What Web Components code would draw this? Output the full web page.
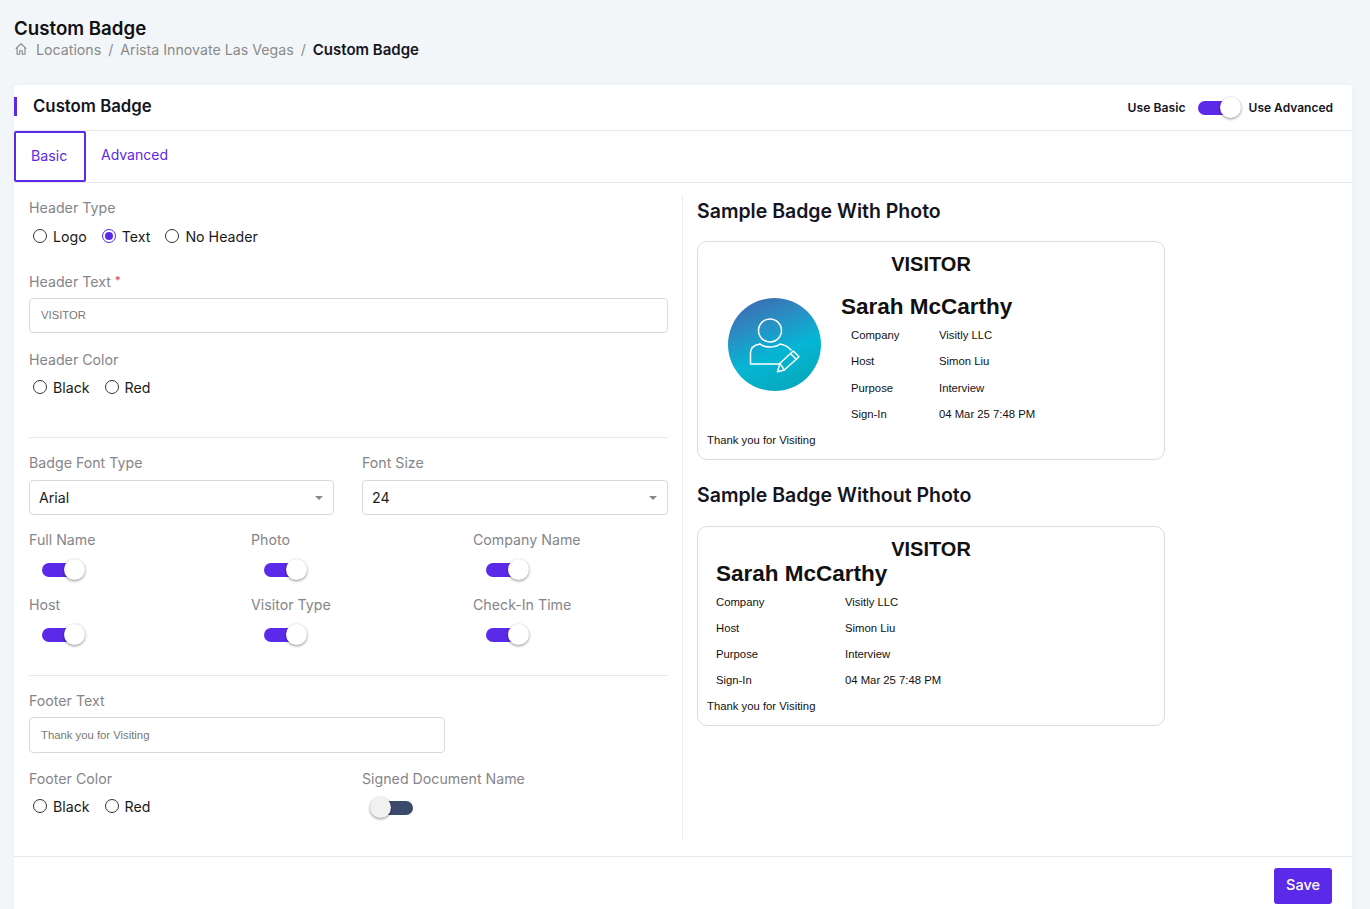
<!DOCTYPE html>
<html>
<head>
<meta charset="utf-8">
<title>Custom Badge</title>
<style>
  html, body { margin: 0; padding: 0; }
  body { background: #f3f6f9; font-family: Inter, "Liberation Sans", sans-serif; height: 909px; overflow: hidden; }
</style>
</head>
<body>
<page-head title="Custom Badge"></page-head>
<main-card>
  <badge-form slot="left"></badge-form>
  <sample-badge slot="right" heading="Sample Badge With Photo" photo></sample-badge>
  <sample-badge slot="right" heading="Sample Badge Without Photo"></sample-badge>
</main-card>

<script>
class PageHead extends HTMLElement {
  constructor() {
    super();
    this.attachShadow({mode: 'open'});
  }
  connectedCallback() {
    this.shadowRoot.innerHTML = `
    <style>
      :host { display: block; padding: 17px 14px 0; height: 85px; box-sizing: border-box; }
      h1 { margin: 0; font: 600 18.7px/24px Inter, sans-serif; color: #111; }
      .crumbs { display: flex; align-items: center; height: 20px; margin-top: -2px; font-size: 14.2px; color: #8a8a8a; }
      svg { width: 14px; height: 14px; margin-right: 8px; }
      .sep { margin: 0 7px; }
      b { font-weight: 600; font-size: 15px; line-height: 20px; padding-top: 1px; color: #15151f; }
    </style>
    <h1>${this.getAttribute('title')}</h1>
    <div class="crumbs">
      <svg viewBox="0 0 16 16" fill="none" stroke="#8a8a8a" stroke-width="1.3" stroke-linejoin="round"><path d="M2 7.5 8 2l6 5.5M3.500 6.500V14h3v-4h3v4h3V6.500"/></svg>
      <span>Locations</span><span class="sep">/</span><span>Arista Innovate Las Vegas</span><span class="sep">/</span><b>Custom Badge</b>
    </div>`;
  }
}

class MainCard extends HTMLElement {
  constructor() {
    super();
    this.attachShadow({mode: 'open'});
    this.shadowRoot.innerHTML = `
    <style>
      :host { display: block; margin: 0 18px 0 14px; background: #fff; border-radius: 4px 4px 0 0; height: 840px; box-shadow: 0 0 6px rgba(0,0,0,.03); }
      .top { display: flex; align-items: center; justify-content: space-between; height: 45px; border-bottom: 1px solid #e9e9ed; padding-right: 19px; box-sizing: content-box; }
      .title { border-left: 3px solid #5a2ae8; height: 19px; line-height: 19px; margin-bottom: 2px; padding-left: 16px; font-weight: 600; font-size: 16.8px; color: #15151f; }
      .mode { display: flex; align-items: center; font-size: 12.2px; font-weight: 600; color: #15151f; }
      .mode toggle-switch { margin: 0 8px 0 12px; }
      .mode span:last-child { font-size: 12px; }
      .tabs { display: flex; height: 51px; border-bottom: 1px solid #e9e9ed; font-size: 14px; color: #5a2ae8; }
      .tab { display: flex; align-items: center; padding: 0 13px 4px; height: 51px; box-sizing: border-box; border: 2px solid transparent; }
      .tab.on { border-color: #5a2ae8; border-radius: 2px; width: 72px; padding: 0 0 2px 15px; font-size: 14.2px; }
      .body { display: flex; height: 674px; border-bottom: 1px solid #e9e9ed; box-sizing: border-box; padding: 12px 0 16px 15px; }
      .left { width: 639px; padding-right: 14px; border-right: 1px solid #eeeef1; }
      .right { padding-left: 14px; width: 468px; }
      .foot { display: flex; justify-content: flex-end; padding: 11px 20px 0; }
      button { width: 58px; height: 36px; border: 0; border-radius: 3px; background: #5a2ae8; color: #fff; font: 500 14.5px Inter, sans-serif; padding: 0 0 3px; }
    </style>
    <div class="top">
      <div class="title">Custom Badge</div>
      <div class="mode"><span>Use Basic</span><toggle-switch on></toggle-switch><span>Use Advanced</span></div>
    </div>
    <div class="tabs"><div class="tab on">Basic</div><div class="tab">Advanced</div></div>
    <div class="body">
      <div class="left"><slot name="left"></slot></div>
      <div class="right"><slot name="right"></slot></div>
    </div>
    <div class="foot"><button>Save</button></div>`;
  }
}

class ToggleSwitch extends HTMLElement {
  constructor() {
    super();
    this.attachShadow({mode: 'open'});
    this.shadowRoot.innerHTML = `
    <style>
      :host { display: inline-block; position: relative; width: 43px; height: 22px; }
      .track { position: absolute; left: 0; top: 4px; width: 40px; height: 14px; border-radius: 7px; background: #5a2ae8; }
      .thumb { position: absolute; right: 0; top: 0; width: 21px; height: 21px; border-radius: 50%; background: #fff; box-shadow: 0 1px 3px rgba(0,0,0,.45); }
      :host([off]) .track { left: 3px; width: 40px; background: #3a4a6b; }
      :host([off]) .thumb { left: 0; right: auto; background: #f1f1f1; }
    </style>
    <div class="track"></div><div class="thumb"></div>`;
  }
}

class RadioGroup extends HTMLElement {
  constructor() {
    super();
    this.attachShadow({mode: 'open'});
  }
  connectedCallback() {
    const checked = this.getAttribute('checked');
    const items = this.getAttribute('options').split(',').map(o => `
      <label class="${o === checked ? 'on' : ''}"><i></i>${o}</label>`).join('');
    this.shadowRoot.innerHTML = `
    <style>
      :host { display: flex; gap: 15px; height: 20px; padding-left: 4px; font-size: 14.2px; color: #1a1a1a; }
      label { display: flex; align-items: center; gap: 6px; }
      i { display: block; border: 1.5px solid #333; border-radius: 50%; box-sizing: content-box; width: 12px; height: 12px; position: relative; }
      .on i { border-color: #5a2ae8; }
      .on i::after { content: ''; position: absolute; inset: 2px; border-radius: 50%; background: #5a2ae8; }
    </style>${items}`;
  }
}

class TextBox extends HTMLElement {
  constructor() {
    super();
    this.attachShadow({mode: 'open'});
    this.shadowRoot.innerHTML = `
    <style>
      :host { display: flex; align-items: center; box-sizing: border-box; height: 35px; padding: 0 11px; border: 1px solid #d9d9d9; border-radius: 4px; font: 11.3px "Liberation Sans", Arial, sans-serif; color: #777; }
      :host([select]) { font: 14.2px Inter, sans-serif; padding: 0 10px 0 9px; color: #222; justify-content: space-between; }
      .arrow { display: none; width: 0; height: 0; border: 4px solid transparent; border-top: 4px solid #888; border-bottom: 0; }
      :host([select]) .arrow { display: block; }
    </style>
    <slot></slot><span class="arrow"></span>`;
  }
}

class BadgeForm extends HTMLElement {
  constructor() {
    super();
    this.attachShadow({mode: 'open'});
    const toggle = name => `<div class="tg"><div class="lab">${name}</div><div class="sw"><toggle-switch on></toggle-switch></div></div>`;
    this.shadowRoot.innerHTML = `
    <style>
      :host { display: block; }
      .lab { font-size: 14.2px; line-height: 20px; color: #85858a; }
      .lab em { color: #e33; font-style: normal; font-size: 11px; vertical-align: 3px; }
      radio-group { margin-top: 7px; }
      hr { border: 0; border-top: 1px solid #e9e9ed; margin: 0; }
      .two { display: grid; grid-template-columns: 305px 306px; column-gap: 28px; }
      .three { display: grid; grid-template-columns: repeat(3, 222px); margin-top: 15px; row-gap: 15px; }
      .tg { height: 50px; }
      .sw { padding: 9px 0 0 13px; }
    </style>
    <div class="lab" style="margin-top:3px">Header Type</div>
    <radio-group style="margin-top:8px" options="Logo,Text,No Header" checked="Text"></radio-group>
    <div class="lab" style="margin-top:24px">Header Text <em>*</em></div>
    <text-box style="margin-top:6px;padding-bottom:2px">VISITOR</text-box>
    <div class="lab" style="margin-top:17px">Header Color</div>
    <radio-group options="Black,Red"></radio-group>
    <hr style="margin-top:40px">
    <div class="two" style="margin-top:15px">
      <div><div class="lab">Badge Font Type</div><text-box select style="margin-top:7px">Arial</text-box></div>
      <div><div class="lab">Font Size</div><text-box select style="margin-top:7px">24</text-box></div>
    </div>
    <div class="three">
      ${['Full Name', 'Photo', 'Company Name', 'Host', 'Visitor Type', 'Check-In Time'].map(toggle).join('')}
    </div>
    <hr style="margin-top:30px">
    <div class="lab" style="margin-top:15px">Footer Text</div>
    <text-box style="margin-top:6px;width:416px;height:36px">Thank you for Visiting</text-box>
    <div class="two" style="margin-top:16px">
      <div><div class="lab">Footer Color</div><radio-group options="Black,Red"></radio-group></div>
      <div><div class="lab">Signed Document Name</div><div class="sw" style="padding:8px 0 0 8px"><toggle-switch on off></toggle-switch></div></div>
    </div>`;
  }
}

class SampleBadge extends HTMLElement {
  constructor() {
    super();
    this.attachShadow({mode: 'open'});
  }
  connectedCallback() {
    const photo = this.hasAttribute('photo');
    const rows = [['Company', 'Visitly LLC'], ['Host', 'Simon Liu'], ['Purpose', 'Interview'], ['Sign-In', '04 Mar 25 7:48 PM']]
      .map(r => `<span>${r[0]}</span><span>${r[1]}</span>`).join('');
    const pic = `
      <div class="pic"><svg viewBox="0 0 93 93" fill="none" stroke="#fff" stroke-width="1.5" stroke-linejoin="round" stroke-linecap="round">
        <circle cx="42" cy="32.500" r="11.500"/>
        <path d="M32 46c-6 1-9.500 4-9.500 9v11H52"/>
        <path d="M32 46c3 2.500 6 3 10 3s7-.5 10-3c4 .8 8 2.500 11 6"/>
        <path d="M49.500 73.700l2.500-8.400 13.300-12.300 5.700 5.700-14.700 13.300z"/><path d="M52 65.300l4.300 6.700M62.500 55.500l5.700 5.700"/>
      </svg></div>`;
    this.shadowRoot.innerHTML = `
    <style>
      :host { display: block; }
      h2 { margin: 0; font: 600 19.5px/24px Inter, sans-serif; color: #15151f; padding-top: 4px; }
      .card { box-sizing: border-box; margin-top: 18px; width: 468px; border: 1px solid #dcdcdc; border-radius: 10px; font-family: "Liberation Sans", Arial, sans-serif; color: #111; padding: 0 9px; }
      .hd { text-align: center; font-weight: 700; font-size: 20px; line-height: 24px; }
      .name { font-weight: 700; font-size: 22.5px; line-height: 28px; }
      .grid { display: grid; font-size: 11.3px; line-height: 14px; row-gap: 12.3px; }
      .foot { font-size: 11.3px; line-height: 14px; }
      .pic { width: 93px; height: 93px; border-radius: 50%; background: linear-gradient(158deg, #4062ad 0%, #2b8cc2 30%, #05b6d4 58%, #08a4b6 100%); flex: none; }
      .pic svg { display: block; width: 93px; height: 93px; }
      .with { height: 219px; padding-top: 10px; }
      .with .row { display: flex; margin-top: 22px; padding-left: 21px; }
      .with .info { margin-left: 20px; margin-top: -5px; }
      .with .grid { grid-template-columns: 88px auto; margin: 7px 0 0 10px; }
      .with .foot { margin-top: 12px; }
      .plain { height: 200px; padding-top: 10px; }
      .plain .name { padding-left: 9px; margin-top: -1px; }
      .plain .grid { grid-template-columns: 129px auto; margin: 7px 0 0 9px; row-gap: 12px; }
      .plain .foot { margin-top: 12px; }
      :host(:not([photo])) h2 { padding-top: 23px; }
      :host(:not([photo])) .card { margin-top: 19px; }
    </style>
    <h2>${this.getAttribute('heading')}</h2>
    <div class="card ${photo ? 'with' : 'plain'}">
      <div class="hd">VISITOR</div>
      ${photo
        ? `<div class="row">${pic}<div class="info"><div class="name">Sarah McCarthy</div><div class="grid">${rows}</div></div></div>`
        : `<div class="name">Sarah McCarthy</div><div class="grid">${rows}</div>`}
      <div class="foot">Thank you for Visiting</div>
    </div>`;
  }
}

customElements.define('toggle-switch', ToggleSwitch);
customElements.define('radio-group', RadioGroup);
customElements.define('text-box', TextBox);
customElements.define('page-head', PageHead);
customElements.define('main-card', MainCard);
customElements.define('badge-form', BadgeForm);
customElements.define('sample-badge', SampleBadge);
</script>
</body>
</html>
